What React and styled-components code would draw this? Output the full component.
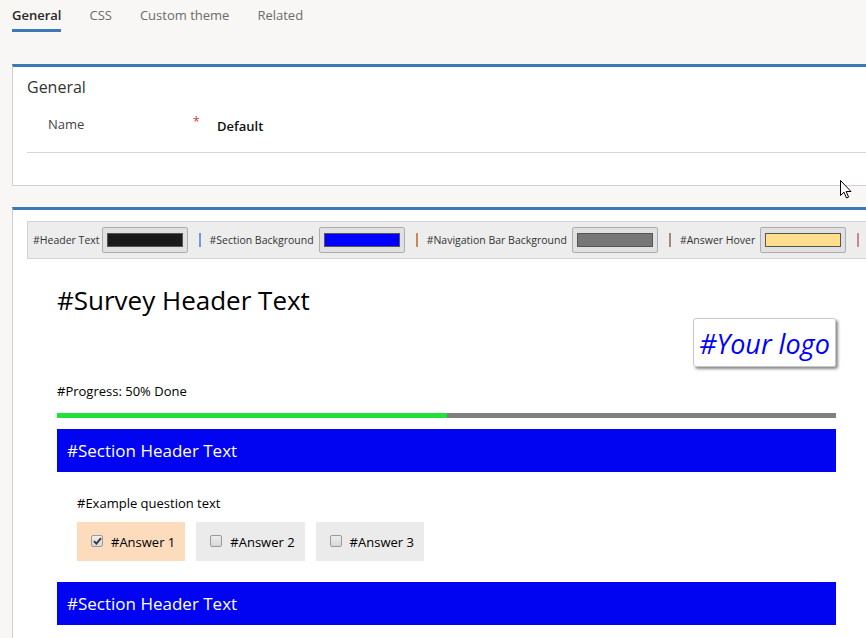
import React from "react";
import styled, { createGlobalStyle } from "styled-components";

const GlobalStyle = createGlobalStyle`
  html, body {
    margin: 0;
    padding: 0;
    background: #f8f7f6;
    overflow: hidden;
  }
  body {
    font-family: "Open Sans", "Noto Sans", sans-serif;
    color: #333;
  }
`;

const Page = styled.div`
  position: relative;
  width: 866px;
  height: 638px;
  overflow: hidden;
`;

const TabBar = styled.div`
  display: flex;
  gap: 28px;
  padding-left: 12px;
`;

const Tab = styled.div`
  font-size: 13px;
  line-height: 20px;
  padding: 5px 0 4px;
  color: ${(p) => (p.active ? "#262626" : "#6b6b6b")};
  font-weight: ${(p) => (p.active ? 600 : 400)};
  border-bottom: 3px solid ${(p) => (p.active ? "#3b79b7" : "transparent")};
`;

const Card = styled.div`
  margin: ${(p) => p.top}px -20px 0 12px;
  background: #fff;
  border-top: 3px solid #3b79b7;
  border-left: 1px solid #cfcfcf;
  border-bottom: 1px solid #cfcfcf;
  padding-left: 14px;
`;

const CardTitle = styled.div`
  font-size: 16px;
  line-height: 24px;
  padding-top: 8px;
  color: #333;
`;

const FieldRow = styled.div`
  display: flex;
  align-items: center;
  height: 30px;
  margin-top: 12px;
  padding: 0 0 11px 21px;
  border-bottom: 1px solid #d8d8d8;
`;

const FieldLabel = styled.div`
  width: 145px;
  font-size: 13px;
  color: #444;
  margin-top: -4px;
`;

const Required = styled.div`
  width: 24px;
  color: #d13438;
  font-size: 12px;
  margin-top: -10px;
`;

const FieldValue = styled.div`
  font-size: 13px;
  font-weight: 600;
  color: #111;
`;

const CardSpacer = styled.div`
  height: 32px;
`;

const Toolbar = styled.div`
  display: flex;
  align-items: center;
  height: 36px;
  margin-top: 11px;
  padding-left: 5px;
  background: #ededed;
  border: 1px solid #d2d2d2;
`;

const ToolLabel = styled.span`
  font-size: 10.5px;
  color: #333;
  margin-right: ${(p) => p.gap}px;
  white-space: nowrap;
`;

const Swatch = styled.div`
  width: 86px;
  height: 26px;
  flex-shrink: 0;
  box-sizing: border-box;
  border: 1px solid #adadad;
  background: #e1e1e1;
  border-radius: 2px;
  display: flex;
  align-items: center;
  justify-content: center;
`;

const SwatchColor = styled.div`
  width: 76px;
  height: 14px;
  box-sizing: border-box;
  border: 1px solid #555;
  background: ${(p) => p.color};
`;

const Sep = styled.span`
  width: 2px;
  height: 14px;
  flex-shrink: 0;
  background: ${(p) => p.color};
  margin: 0 9px 0 11px;
`;

const Survey = styled.div`
  width: 779px;
  margin-left: 30px;
  padding-bottom: 20px;
`;

const SurveyTitle = styled.h1`
  margin: 24px 0 0;
  font-size: 26px;
  line-height: 34px;
  font-weight: 400;
  color: #000;
`;

const LogoRow = styled.div`
  display: flex;
  justify-content: flex-end;
  margin-top: 1px;
`;

const Logo = styled.div`
  width: 143px;
  height: 49px;
  box-sizing: border-box;
  border: 1px solid #c8c8c8;
  border-radius: 3px;
  box-shadow: 2px 2px 3px #888;
  display: flex;
  align-items: center;
  justify-content: center;
  font-size: 27px;
  font-style: italic;
  color: #0000ff;
  padding-top: 1px;
  white-space: nowrap;
`;

const ProgressText = styled.div`
  margin-top: 15px;
  font-size: 13px;
  line-height: 18px;
  color: #000;
`;

const ProgressTrack = styled.div`
  margin-top: 13px;
  height: 5px;
  background: #808080;
`;

const ProgressFill = styled.div`
  height: 100%;
  background: #22e03a;
`;

const SectionHeader = styled.div`
  margin-top: ${(p) => p.top}px;
  height: 43px;
  background: #0004f0;
  color: #fff;
  font-size: 17px;
  display: flex;
  align-items: center;
  padding-left: 10px;
`;

const Question = styled.div`
  margin: 22px 0 0 20px;
  font-size: 13px;
  line-height: 18px;
  color: #000;
`;

const Answers = styled.div`
  display: flex;
  gap: 11px;
  margin: 10px 0 0 20px;
`;

const Answer = styled.div`
  display: flex;
  align-items: center;
  height: 39px;
  padding: 0 10px 0 14px;
  background: ${(p) => (p.selected ? "#fddcbd" : "#ebebeb")};
  font-size: 13px;
  color: #000;
`;

const Box = styled.span`
  width: 12px;
  height: 12px;
  box-sizing: border-box;
  border: 1px solid #9a9a9a;
  border-radius: 2px;
  background: linear-gradient(#eeeeee, #d8d8d8);
  margin-right: 8px;
  display: flex;
  align-items: center;
  justify-content: center;
  margin-top: -2px;
`;

const Cursor = styled.svg`
  position: absolute;
  left: 840px;
  top: 180px;
`;

const toolItems = [
  { label: "#Header Text", color: "#1b1b1b", sep: "#6f9fd0", gap: 2 },
  { label: "#Section Background", color: "#0000ff", sep: "#c98a55", gap: 5 },
  { label: "#Navigation Bar Background", color: "#777777", sep: "#a08a80", gap: 5 },
  { label: "#Answer Hover", color: "#ffdf8d", sep: "#c98a8a", gap: 5 },
];

const answers = ["#Answer 1", "#Answer 2", "#Answer 3"];

export default function App() {
  return (
    <Page>
      <GlobalStyle />
      <TabBar>
        <Tab active>General</Tab>
        <Tab>CSS</Tab>
        <Tab>Custom theme</Tab>
        <Tab>Related</Tab>
      </TabBar>

      <Card top={32}>
        <CardTitle>General</CardTitle>
        <FieldRow>
          <FieldLabel>Name</FieldLabel>
          <Required>*</Required>
          <FieldValue>Default</FieldValue>
        </FieldRow>
        <CardSpacer />
      </Card>

      <Card top={21}>
        <Toolbar>
          {toolItems.map((t) => (
            <React.Fragment key={t.label}>
              <ToolLabel gap={t.gap}>{t.label}</ToolLabel>
              <Swatch>
                <SwatchColor color={t.color} />
              </Swatch>
              <Sep color={t.sep} />
            </React.Fragment>
          ))}
        </Toolbar>
        <Survey>
          <SurveyTitle>#Survey Header Text</SurveyTitle>
          <LogoRow>
            <Logo>#Your logo</Logo>
          </LogoRow>
          <ProgressText>#Progress: 50% Done</ProgressText>
          <ProgressTrack>
            <ProgressFill style={{ width: "50%" }} />
          </ProgressTrack>
          <SectionHeader top={11}>#Section Header Text</SectionHeader>
          <Question>#Example question text</Question>
          <Answers>
            {answers.map((a, i) => (
              <Answer key={a} selected={i === 0}>
                <Box>
                  {i === 0 && (
                    <svg width="9" height="8" viewBox="0 0 9 8">
                      <path d="M1 4.2 L3.4 6.6 L8 1.2" fill="none" stroke="#333" strokeWidth="1.8" />
                    </svg>
                  )}
                </Box>
                {a}
              </Answer>
            ))}
          </Answers>
          <SectionHeader top={21}>#Section Header Text</SectionHeader>
        </Survey>
      </Card>

      <Cursor width="13" height="20" viewBox="0 0 13 20">
        <path d="M0.5 0.5 L0.5 15.5 L4 12.2 L6.5 18 L8.6 17.1 L6.2 11.5 L11 11.5 Z" fill="#fff" stroke="#000" strokeWidth="1" />
      </Cursor>
    </Page>
  );
}
